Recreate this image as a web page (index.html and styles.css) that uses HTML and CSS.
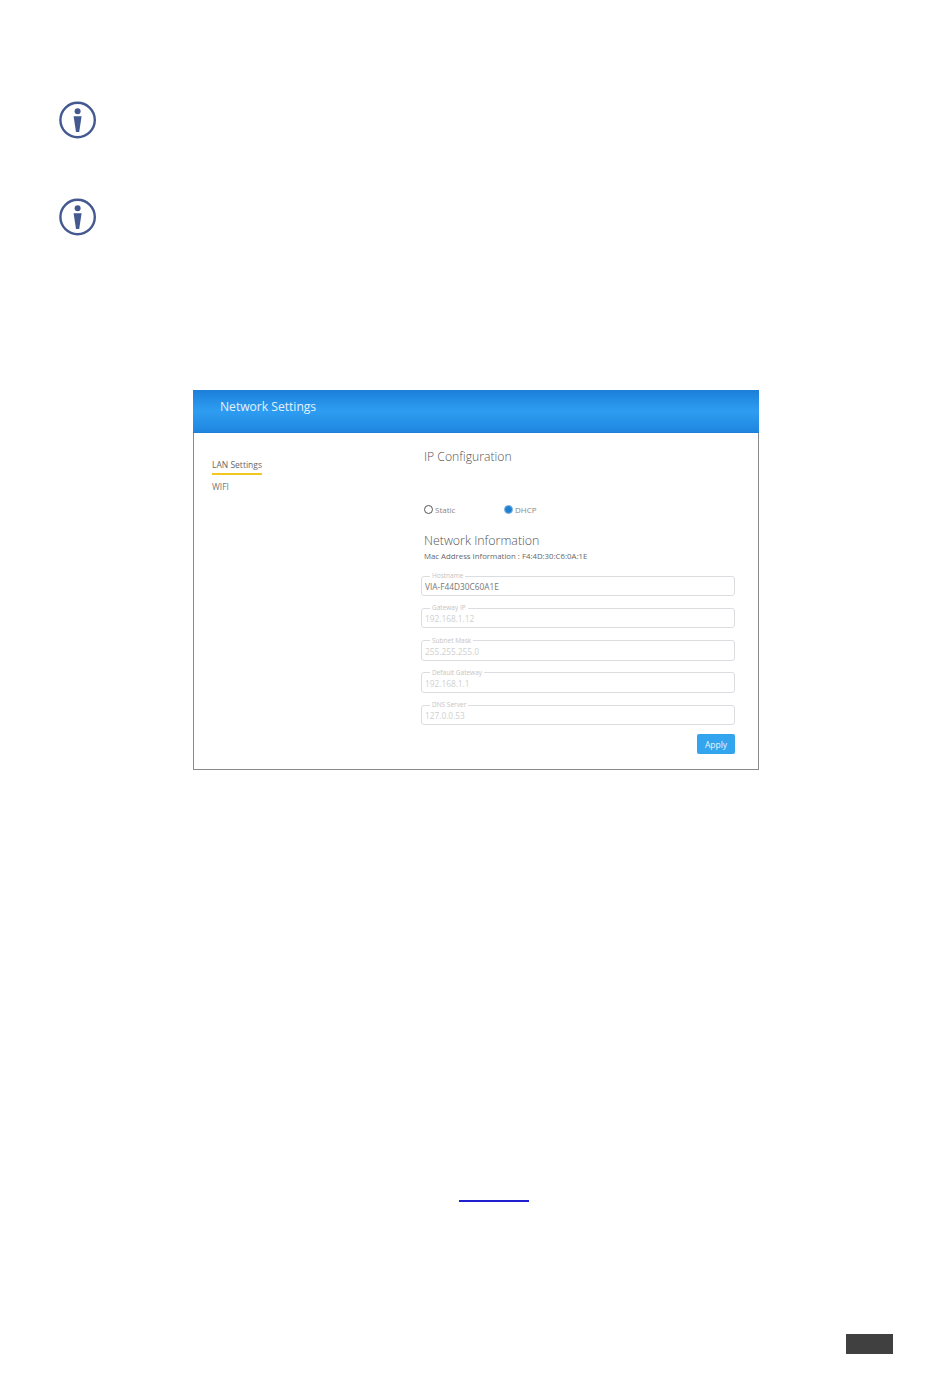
FILE: index.html
```html
<!DOCTYPE html>
<html lang="en">
<head>
<meta charset="utf-8">
<title>Network Settings</title>
<link rel="stylesheet" href="styles.css">
</head>
<body>
<div class="page">
  <div class="notes">
    <svg class="info" viewBox="0 0 38 38"><circle cx="18.6" cy="19" r="17.2" fill="none" stroke="#44598f" stroke-width="2.4"/><circle cx="18.6" cy="10.2" r="3" fill="#44598f"/><path d="M14.6 15.2h8l-2.4 15.8h-3.2z" fill="#44598f"/></svg>
    <svg class="info" viewBox="0 0 38 38"><circle cx="18.6" cy="19" r="17.2" fill="none" stroke="#44598f" stroke-width="2.4"/><circle cx="18.6" cy="10.2" r="3" fill="#44598f"/><path d="M14.6 15.2h8l-2.4 15.8h-3.2z" fill="#44598f"/></svg>
  </div>
  <section class="panel">
    <header class="panel-head">Network Settings</header>
    <div class="panel-body">
      <nav class="side">
        <a class="side-link active">LAN Settings</a>
        <a class="side-link">WIFI</a>
      </nav>
      <div class="main">
        <h2 class="h-ip">IP Configuration</h2>
        <div class="radios">
          <span class="radio"><i class="dot"></i>Static</span>
          <span class="radio"><i class="dot on"></i>DHCP</span>
        </div>
        <h2 class="h-net">Network Information</h2>
        <p class="mac">Mac Address Information : F4:4D:30:C6:0A:1E</p>
        <fieldset class="field"><legend>Hostname</legend><span class="val dark">VIA-F44D30C60A1E</span></fieldset>
        <fieldset class="field"><legend>Gateway IP</legend><span class="val">192.168.1.12</span></fieldset>
        <fieldset class="field"><legend>Subnet Mask</legend><span class="val">255.255.255.0</span></fieldset>
        <fieldset class="field"><legend>Default Gateway</legend><span class="val">192.168.1.1</span></fieldset>
        <fieldset class="field"><legend>DNS Server</legend><span class="val">127.0.0.53</span></fieldset>
        <div class="actions"><button class="apply" type="button">Apply</button></div>
      </div>
    </div>
  </section>
  <div class="link-rule"></div>
  <div class="page-no"></div>
</div>
</body>
</html>
```
FILE: styles.css
```css
* { box-sizing: border-box; }
html, body { margin: 0; background: #fff; }
body { font-family: "Open Sans", "Liberation Sans", sans-serif; color: #555; }
.page { width: 950px; height: 1378px; padding-top: 101px; display: flex; flex-direction: column; }
.notes { margin-left: 59px; display: flex; flex-direction: column; gap: 59px; }
.info { width: 38px; height: 38px; display: block; }
.panel { width: 566px; height: 380px; margin: 154px 0 0 193px; border: 1px solid #8a8a8a; border-top: 0; display: flex; flex-direction: column; }
.panel-head { height: 43px; margin: 0 -1px; padding: 8px 0 0 27px; font-size: 12.1px; line-height: 18px; color: #e3f1fd; background: linear-gradient(180deg, #1c7fda 0%, #2e9df1 50%, #1f86e0 100%); border-bottom: 1px solid #1d7fd6; }
.panel-body { flex: 1; display: flex; }
.side { width: 227px; padding: 24px 0 0 18px; display: flex; flex-direction: column; align-items: flex-start; gap: 4px; }
.side-link { font-size: 8.5px; line-height: 15px; color: #777; }
.side-link.active { border-bottom: 2px solid #f2c81e; padding-bottom: 1px; width: 50px; color: #666; }
.main { width: 314px; display: flex; flex-direction: column; }
.h-ip, .h-net { margin: 0 0 0 3px; font-weight: 300; color: #555; line-height: 16px; }
.h-ip { margin-top: 16px; font-size: 12.2px; }
.radios { margin: 38px 0 0 3px; display: flex; height: 12px; }
.radio { width: 80px; display: flex; align-items: center; font-size: 8px; color: #888; }
.dot { width: 9px; height: 9px; margin-right: 2px; border-radius: 50%; border: 1px solid #555; background: #fff; }
.dot.on { background: #1f7fd0; border-color: #7fb6e0; }
.h-net { margin-top: 18px; font-size: 12.4px; line-height: 15px; }
.mac { margin: 2px 0 0 3px; font-size: 7.8px; line-height: 13px; color: #666; }
.field { margin: 9px 0 0; padding: 0 3px; height: 24px; border: 1px solid #dcdde0; border-radius: 3px; min-width: 0; }
.field + .field { margin-top: 8.3px; }
.field legend { margin-left: 5px; padding: 0 2px; font-size: 6.5px; line-height: 8px; color: #c4c4c4; }
.val { display: block; font-size: 8.3px; line-height: 13px; color: #cfcfcf; }
.val.dark { color: #777; }
.actions { margin-top: 9px; display: flex; justify-content: flex-end; }
.apply { width: 38px; height: 20px; padding: 0; border: 0; border-radius: 2px; background: #33a4ee; color: #e9f6ff; font: 8.5px "Open Sans", sans-serif; }
.link-rule { width: 70px; height: 2px; margin: 430px 0 0 459px; background: #2020d0; }
.page-no { width: 47px; height: 20px; margin: 132px 0 0 846px; background: #404040; }
```
